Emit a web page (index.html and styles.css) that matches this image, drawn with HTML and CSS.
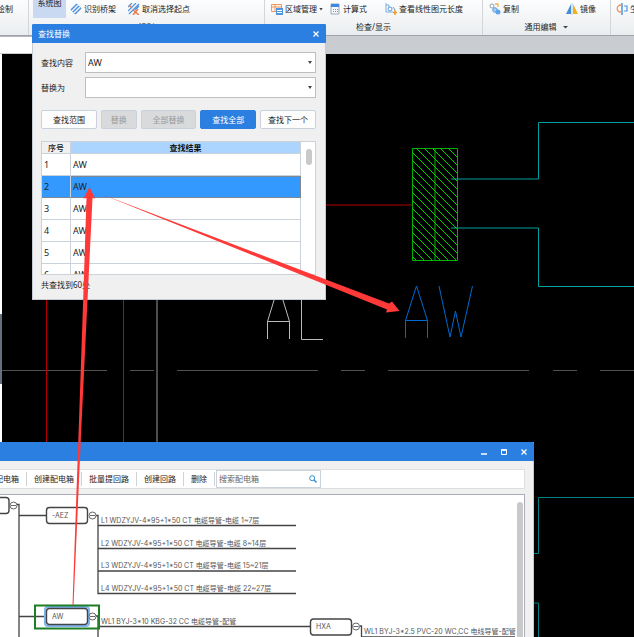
FILE: index.html
```html
<!DOCTYPE html>
<html lang="zh-CN">
<head>
<meta charset="utf-8">
<title>查找替换</title>
<link rel="stylesheet" href="styles.css">
</head>
<body>
<header class="ribbon">
  <section class="group group-draw"><div class="tools"><button class="tool">绘制</button></div></section>
  <section class="group group-detect">
    <div class="tools">
      <button class="tool tool-big">系统图</button>
      <button class="tool"><svg class="icon" viewBox="0 0 12 12"><g fill="none" stroke="#4d93dc" stroke-width="1.5"><path d="M1 7 7 1M3 9 9 3M5 11l6-6"/><path d="M1 7l4 4M7 1l4 4" stroke="#9cc6ee" stroke-width="1"/></g></svg>识别桥架</button>
      <button class="tool"><svg class="icon" viewBox="0 0 12 12"><path d="M0 4 4 0M0 8 8 0M1 11 11 1M7 7l4-4" stroke="#4d93dc" stroke-width="1.2"/><path d="M5 7l6 5M10 6l-5 6M1 2l3 3" stroke="#ee7446" stroke-width="1.4"/></svg>取消选择起点</button>
    </div>
    <div class="caption">识别</div>
  </section>
  <section class="group group-check">
    <div class="tools">
      <button class="tool"><svg class="icon" viewBox="0 0 12 12"><path d="M.5 1.5h10v7H.5zM.5 4h10M4 1.5v7" fill="#fff2e6" stroke="#ee9860"/><path d="M5 5h7v7H5z" fill="#4f96de"/><path d="M6 7.5h5M6 9.5h5" stroke="#fff"/></svg>区域管理<i class="caret"></i></button>
      <button class="tool"><svg class="icon" viewBox="0 0 12 12"><path d="M2 1h8v10H2z" fill="#f5f7fa" stroke="#9aa7b5"/><path d="M2 1h8v3H2z" fill="#3d8ae0"/><path d="M4 6.5h1M6 6.5h1M8 6.5h1M4 8.500h1M6 8.500h1M8 8.500h1" stroke="#8593a3"/></svg>计算式</button>
      <button class="tool tool-length"><svg class="icon" viewBox="0 0 12 12"><path d="M1 0v9h7M1 2h3v3" fill="none" stroke="#79aee0"/><circle cx="5" cy="6" r="2" fill="#fff" stroke="#5f9dd8"/><path d="M8 4l2 3" stroke="#5f9dd8"/><path d="M10 7v5M8 9.500h4" stroke="#f09a22" stroke-width="1.5"/></svg>查看线性图元长度</button>
    </div>
    <div class="caption">检查/显示</div>
  </section>
  <section class="group group-edit">
    <div class="tools">
      <button class="tool"><svg class="icon" viewBox="0 0 12 12"><circle cx="3" cy="3" r="2" fill="#fff" stroke="#8f9baa"/><path d="M6 1h3v3" fill="none" stroke="#efb04b" stroke-width="1.300"/><circle cx="6" cy="7" r="2.300" fill="#a9cff3" stroke="#5d9fe0"/><circle cx="9" cy="9" r="2.500" fill="#5da4ea"/></svg>复制</button>
      <button class="tool"><svg class="icon" viewBox="0 0 12 12"><path d="M5 1v10H0z" fill="#458fd9"/><path d="M7 1v10h5z" fill="#f5ad18"/><path d="M6 0v12" stroke="#aabccd" stroke-width=".7"/></svg>镜像</button>
    </div>
    <div class="caption">通用编辑<i class="caret caret-wide"></i></div>
  </section>
  <section class="group group-more"><div class="tools"><button class="tool"><svg class="icon" viewBox="0 0 12 12"><path d="M5 2C0 2 0 9 5 9" fill="none" stroke="#ef9259" stroke-width="1.300"/><path d="M6 0v12" stroke="#4f96de" stroke-width="1.500"/><path d="M8 3h3v5H8" fill="none" stroke="#4f96de" stroke-width="1.200"/></svg>生成</button></div></section>
</header>
<div class="band"><div class="band-tab"></div></div>

<main class="workspace">
  <div class="rail"><div class="rail-handle"></div></div>
  <svg class="drawing" aria-label="图纸">
    <defs><clipPath id="box"><path d="M412 94h46v113h-46z"/></clipPath></defs>
    <g fill="none" transform="translate(-2 0)">
      <path d="M2 316.500H107M130 316.500h24M177 316.500h141M341 316.500h24M388 316.500h141M553 316.500h24M600 316.500h3000" stroke="#505050"/>
      <path d="M325 151h87M46.500 240v160" stroke="#b40000"/>
      <path d="M123.500 240v160" stroke="#c80000"/>
      <path d="M157 240v160" stroke="#999"/>
      <path d="M451 125h87.500V68.500H4000M451 174h87.500v58.500H4000" stroke="#00a0a0"/>
      <path d="M4000 443.500H538.500v56H530M530 549h8.500V900" stroke="#008080"/>
      <path clip-path="url(#box)" stroke="#00d200" d="M400 46l70 70M400 54l70 70M400 62l70 70M400 70l70 70M400 78l70 70M400 86l70 70M400 94l70 70M400 102l70 70M400 110l70 70M400 118l70 70M400 126l70 70M400 134l70 70M400 142l70 70M400 150l70 70M400 158l70 70M400 166l70 70M400 174l70 70M400 182l70 70M400 190l70 70"/>
      <path d="M412.500 94.500h45v112h-45zM435 94v112" stroke="#00b400"/>
      <path d="M405.500 284v-17.500h22V284M405.500 266.500l11-34.500 11 34.500M439 232l11 51 5.500-26 5.500 26 11.500-51" stroke="#0069d0"/>
      <path d="M267.500 285v-17.500h22V285M267.500 267.500l11-36 11 36M301.500 232v53.500H323" stroke="#bbb"/>
    </g>
  </svg>
</main>

<section class="window find" aria-label="查找替换">
  <div class="titlebar"><span class="title">查找替换</span><button class="winbtn" aria-label="关闭"><svg viewBox="0 0 8 8"><path d="M1.500 1.500l5 5M6.500 1.500l-5 5" stroke="#fff" stroke-width="1.300"/></svg></button></div>
  <div class="find-body">
    <div class="fields">
      <label for="what">查找内容</label>
      <div class="combo"><select id="what"><option>AW</option></select><i class="caret"></i></div>
      <label for="with">替换为</label>
      <div class="combo"><select id="with"><option></option></select><i class="caret"></i></div>
    </div>
    <div class="actions">
      <button class="btn wide">查找范围</button>
      <button class="btn" disabled>替换</button>
      <button class="btn wide" disabled>全部替换</button>
      <button class="btn wide primary">查找全部</button>
      <button class="btn wide">查找下一个</button>
    </div>
    <div class="results">
      <table>
        <thead><tr><th class="num">序号</th><th class="res">查找结果</th></tr></thead>
        <tbody>
          <tr><td>1</td><td>AW</td></tr>
          <tr class="selected"><td>2</td><td>AW</td></tr>
          <tr><td>3</td><td>AW</td></tr>
          <tr><td>4</td><td>AW</td></tr>
          <tr><td>5</td><td>AW</td></tr>
          <tr><td>6</td><td>AW</td></tr>
        </tbody>
      </table>
      <div class="track"><div class="thumb"></div></div>
    </div>
    <div class="count">共查找到60处</div>
  </div>
</section>

<section class="window system" aria-label="系统图">
  <div class="titlebar">
    <button class="winbtn" aria-label="最小化"><svg viewBox="0 0 8 8"><path d="M1 6h6" stroke="#fff" stroke-width="1.500"/></svg></button>
    <button class="winbtn" aria-label="最大化"><svg viewBox="0 0 8 8"><path d="M1.500 2h5v4.500h-5z" fill="none" stroke="#fff"/><path d="M1 2h6" stroke="#fff" stroke-width="1.600"/></svg></button>
    <button class="winbtn" aria-label="关闭"><svg viewBox="0 0 8 8"><path d="M1.500 1.500l5 5M6.500 1.500l-5 5" stroke="#fff" stroke-width="1.300"/></svg></button>
  </div>
  <div class="system-body">
    <div class="toolbar">
      <button>配电箱</button><button>创建配电箱</button><button>批量提回路</button><button>创建回路</button><button>删除</button>
      <div class="search"><input type="text" placeholder="搜索配电箱" aria-label="搜索配电箱"><svg class="lens" viewBox="0 0 8 8"><circle cx="3.200" cy="3.200" r="2.500" fill="none" stroke="#2e8fd0"/><path d="M5 5l2.500 2.500" stroke="#2e8fd0" stroke-width="1.400"/></svg></div>
    </div>
    <div class="tree">
      <svg class="diagram">
        <g transform="translate(12 -495)">
          <g fill="none" stroke="#444">
            <path d="M17 504.500h2V640M19 515.500h27M19 616.500h27M96 515.500h2V593.500H296M98 525.500H296M98 548.500H296M98 571H296M96 616h2V640M98 626.500H310M360 626h1.500V640M361 637H515" stroke-width="1.300"/>
            <g fill="#fff" stroke-width="1.400">
              <rect x="-30" y="497.500" width="39" height="16" rx="3"/>
              <rect x="46.500" y="507.500" width="41" height="16" rx="3"/>
              <rect class="halo" x="45" y="607" width="44" height="19" rx="3"/>
              <rect x="46.500" y="608.500" width="41" height="16" rx="3"/>
              <rect x="310.500" y="619" width="41" height="16" rx="3"/>
            </g>
            <g fill="#fff" stroke="#666" stroke-width="1">
              <circle cx="13.500" cy="505.500" r="3.500"/><circle cx="92.500" cy="515.500" r="3.500"/><circle cx="92.500" cy="616.500" r="3.500"/><circle cx="356" cy="626.500" r="3.500"/>
              <path d="M11 505.500h5M90 515.500h5M90 616.500h5M353.500 626.500h5"/>
            </g>
            <rect x="35" y="605.500" width="64" height="23" stroke="#1f7d26" stroke-width="2"/>
          </g>
          <g class="labels">
            <text x="52" y="518">-AEZ</text>
            <text x="52" y="619">AW</text>
            <text x="316" y="629">HXA</text>
            <text x="101" y="523">L1 WDZYJV-4*95+1*50 CT 电缆导管-电缆 1~7层</text>
            <text x="101" y="546">L2 WDZYJV-4*95+1*50 CT 电缆导管-电缆 8~14层</text>
            <text x="101" y="568">L3 WDZYJV-4*95+1*50 CT 电缆导管-电缆 15~21层</text>
            <text x="101" y="591">L4 WDZYJV-4*95+1*50 CT 电缆导管-电缆 22~27层</text>
            <text x="101" y="624">WL1 BYJ-3*10 KBG-32 CC 电缆导管-配管</text>
            <text x="364" y="634">WL1 BYJ-3*2.5 PVC-20 WC,CC 电线导管-配管</text>
          </g>
        </g>
      </svg>
      <div class="track"><div class="thumb"></div></div>
    </div>
  </div>
</section>

<svg class="arrows" aria-hidden="true">
  <g fill="#ff3838">
    <path d="M89.500 187L95 198.500l-2.500-.5L88 290 81 435 73.500 605h-1L78.500 435 83.500 290 86.500 198l-3 .5z"/>
    <path d="M101 194L389 303.500 392 301.500 399.500 311 386 312.500 387 309.500z"/>
  </g>
</svg>
</body>
</html>
```
FILE: styles.css
```css
* { box-sizing: border-box; }

body {
  margin: 0;
  height: 100vh;
  overflow: hidden;
  position: relative;
  display: flex;
  flex-direction: column;
  background: #000;
  color: #222;
  font: 8px/12px "Noto Sans", "Noto Sans CJK SC", sans-serif;
}

button, input, select { font: inherit; color: inherit; margin: 0; padding: 0; border: 0; background: none; border-radius: 0; white-space: nowrap; }

.caret {
  flex: none;
  width: 4px;
  height: 3px;
  background: #444;
  clip-path: polygon(0 0, 100% 0, 50% 100%);
}
.caret-wide { width: 6px; }

/* Ribbon */
.ribbon {
  flex: none;
  display: grid;
  grid-template-columns: 29px 236px 218px 128px 1fr;
  height: 36px;
  overflow: hidden;
  background: linear-gradient(#fdfdfe, #eaedef);
  border-bottom: 1px solid #a0a4a8;
}
.group { display: flex; flex-direction: column; gap: 3px; border-right: 1px solid #d3d6d9; overflow: hidden; }
.group:last-child { border-right: 0; }
.tools { display: flex; height: 18px; align-items: center; }
.tool { display: flex; flex: none; align-items: center; gap: 2px; height: 18px; }
.icon { width: 12px; height: 12px; fill: none; }
.caption { display: flex; justify-content: center; align-items: center; gap: 6px; }
.group-draw .tools { justify-content: flex-end; padding-right: 15px; }
.group-detect .tools { padding-left: 4px; gap: 4px; }
.group-detect .tool + .tool + .tool { margin-left: 8px; }
.tool-big { width: 33px; justify-content: center; align-items: flex-start; background: #cad9f2; line-height: 6px; }
.group-check .tools { padding-left: 6px; gap: 6px; }
.tool-length { margin-left: 12px; }
.group-edit .tools { padding: 0 14px 0 6px; justify-content: space-between; }
.group-more .tools { padding-left: 5px; }

.band { flex: none; height: 18px; background: #c9ccd1; }
.band-tab { width: 108px; height: 17px; background: #fff; border-top: 1px solid #b5b8bc; }

/* Drawing */
.workspace { flex: 1; display: flex; min-height: 0; }
.rail { width: 2px; background: #fff; padding-top: 260px; }
.rail-handle { height: 70px; background: #667080; }
.drawing { flex: 1; min-width: 0; height: 100%; }

/* Windows */
.window { position: absolute; background: #f0f0f0; border: 1px solid #c4cbd3; border-top-color: #2b7fe1; }
.titlebar { display: flex; align-items: center; height: 18px; margin: 0 -1px; padding: 0 6px; background: #2b7fe1; color: #fff; }
.title { flex: 1; }
.winbtn { display: flex; }
.winbtn svg { width: 8px; height: 8px; }

.find { left: 32px; top: 24px; width: 294px; }
.find-body { padding: 9px 9px 8px 8px; }
.fields { display: grid; grid-template-columns: 44px 1fr; row-gap: 4px; align-items: center; }
.combo { display: flex; align-items: center; height: 21px; padding: 0 3px 0 2px; background: #fff; border: 1px solid #bfbfbf; }
.combo select { flex: 1; height: 19px; appearance: none; font-size: 9px; outline: 0; }
.actions { display: flex; gap: 4px; margin-top: 12px; }
.btn { flex: 35 1 0; height: 19px; background: #fdfdfd; border: 1px solid #c9d1de; border-radius: 2px; }
.btn.wide { flex-grow: 56; }
.btn:disabled { background: #d9dadb; color: #999; }
.btn.primary { background: #2b7fe1; border-color: #2b7fe1; color: #fff; }

.results { display: flex; height: 134px; margin-top: 12px; overflow: hidden; background: #fff; border: 1px solid #ccd2da; }
table { flex: 1; height: 144px; border-collapse: separate; border-spacing: 0; table-layout: fixed; }
th { height: 12px; padding: 0; line-height: 11px; background: #f0f0f0; border-right: 1px solid #ccd2da; border-bottom: 1px solid #ccd2da; font-weight: 500; }
th.num { width: 29px; }
th.res { background: #abd5ff; font-weight: 700; color: #111; }
td { height: 22px; padding: 0 2px; font-size: 9px; border-right: 1px solid #ccd2da; border-bottom: 1px solid #ccd2da; }
.selected td { background: #3399ff; border-bottom-color: #7d8794; }
.selected td + td { box-shadow: inset 1px 1px #7d8794; border-right-color: #7d8794; }
.results .track { width: 14px; padding: 7px 3px 0 5px; }
.thumb { background: #c9c9c9; border-radius: 3px; }
.results .thumb { height: 16px; }
.count { margin-top: 4px; }

.system { left: -17px; top: 442px; bottom: 0; width: 551px; display: flex; flex-direction: column; border-bottom: 0; }
.system .titlebar { flex: none; justify-content: flex-end; gap: 12px; }
.system-body { flex: 1; min-height: 0; display: flex; flex-direction: column; gap: 5px; padding: 8px 8px 0 3px; }
.toolbar { flex: none; display: flex; align-items: center; height: 20px; background: #fff; border: 1px solid #dcdfe2; }
.toolbar button { flex: none; height: 14px; padding: 0 7px; border-right: 1px solid #d0d3d6; }
.search { display: flex; align-items: center; width: 105px; height: 18px; margin-left: 1px; padding: 0 3px 0 2px; border: 1px solid #ccd2da; }
.search input { flex: 1; min-width: 0; outline: 0; }
.search input::placeholder { color: #666; opacity: 1; }
.lens { width: 8px; height: 8px; }
.tree { flex: 1; min-height: 0; display: flex; background: #fff; border: 1px solid #a8adb8; border-bottom: 0; }
.diagram { flex: 1; min-width: 0; height: 100%; }
.diagram .halo { fill: #fff; stroke: #7fb6f5; stroke-width: 2; }
.labels { fill: #555; font-family: Inter, "Noto Sans CJK SC", sans-serif; font-size: 7px; }
.tree .track { width: 8px; padding: 7px 1px 0; }
.tree .thumb { height: 100%; border-radius: 3px 3px 0 0; }

.arrows { position: absolute; inset: 0; width: 100%; height: 100%; pointer-events: none; }
```
